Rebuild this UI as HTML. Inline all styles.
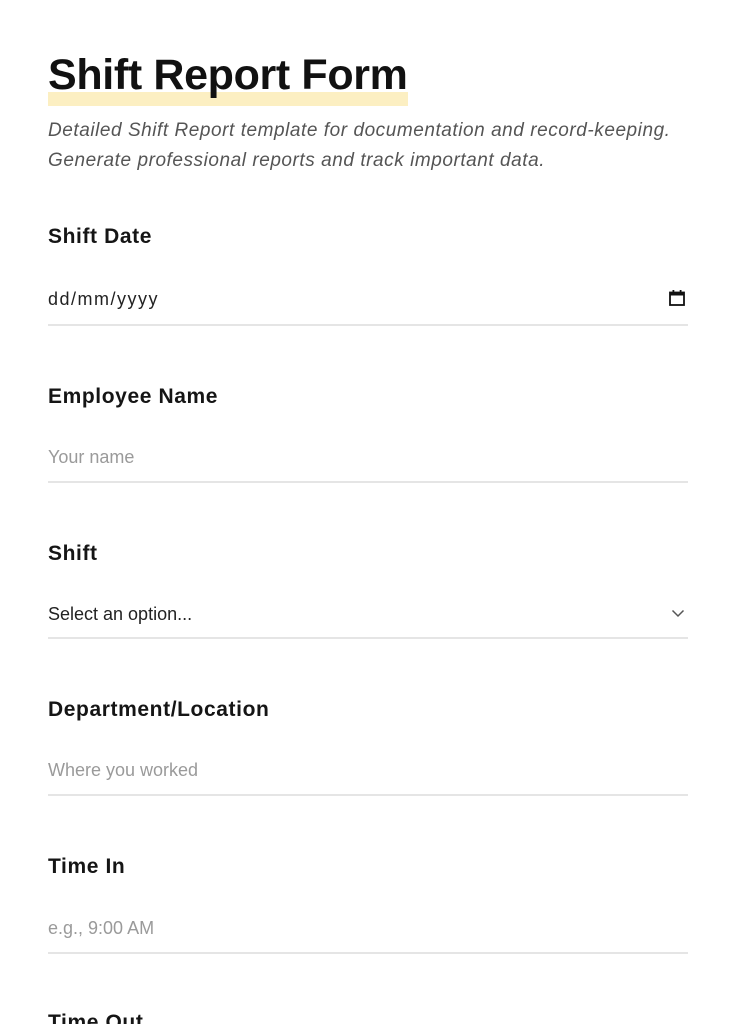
<!DOCTYPE html>
<html><head><meta charset="utf-8">
<style>
html,body{margin:0;padding:0;background:#fff;width:736px;height:1024px;overflow:hidden;position:relative;font-family:"Liberation Sans",sans-serif;}
.a{position:absolute;white-space:nowrap;}
.hl{position:absolute;left:48px;top:92px;width:360px;height:14px;background:#fcefc2;}
h1{position:absolute;left:48px;top:49px;margin:0;font-size:43px;font-weight:700;letter-spacing:-0.35px;color:#111;line-height:52px;}
.sub{left:48px;font-size:19px;font-style:italic;color:#555;letter-spacing:0.55px;}
.lab{left:48px;font-size:21px;font-weight:700;color:#151515;letter-spacing:0.6px;}
.val{left:48px;font-size:18px;color:#222;}
.ph{left:48px;font-size:18px;color:#9a9a9a;}
.line{position:absolute;left:48px;width:640px;height:2px;background:#e5e5e5;}
</style></head><body>
<div class="hl"></div>
<h1>Shift Report Form</h1>
<div class="a sub" style="top:120px">Detailed Shift Report template for documentation and record-keeping.</div>
<div class="a sub" style="top:150px">Generate professional reports and track important data.</div>

<div class="a lab" style="top:225px">Shift Date</div>
<div class="a val" style="top:289px;letter-spacing:1.5px">dd/mm/yyyy</div>
<svg class="a" style="left:668px;top:289px" width="18" height="18" viewBox="0 0 18 18"><rect x="2" y="3.5" width="14" height="12.5" fill="none" stroke="#111" stroke-width="1.8"/><rect x="2" y="3.5" width="14" height="3" fill="#111"/><rect x="4.5" y="1" width="1.8" height="3" fill="#111"/><rect x="11.7" y="1" width="1.8" height="3" fill="#111"/></svg>
<div class="line" style="top:324px"></div>

<div class="a lab" style="top:385px">Employee Name</div>
<div class="a ph" style="top:447px">Your name</div>
<div class="line" style="top:481px"></div>

<div class="a lab" style="top:542px">Shift</div>
<div class="a val" style="top:604px">Select an option...</div>
<svg class="a" style="left:671px;top:608px" width="14" height="10" viewBox="0 0 14 10"><path d="M1.5 2.5 L7 8 L12.5 2.5" fill="none" stroke="#555" stroke-width="1.5"/></svg>
<div class="line" style="top:637px"></div>

<div class="a lab" style="top:698px">Department/Location</div>
<div class="a ph" style="top:760px">Where you worked</div>
<div class="line" style="top:794px"></div>

<div class="a lab" style="top:855px">Time In</div>
<div class="a ph" style="top:918px">e.g., 9:00 AM</div>
<div class="line" style="top:952px"></div>

<div class="a lab" style="top:1011px">Time Out</div>
</body></html>
